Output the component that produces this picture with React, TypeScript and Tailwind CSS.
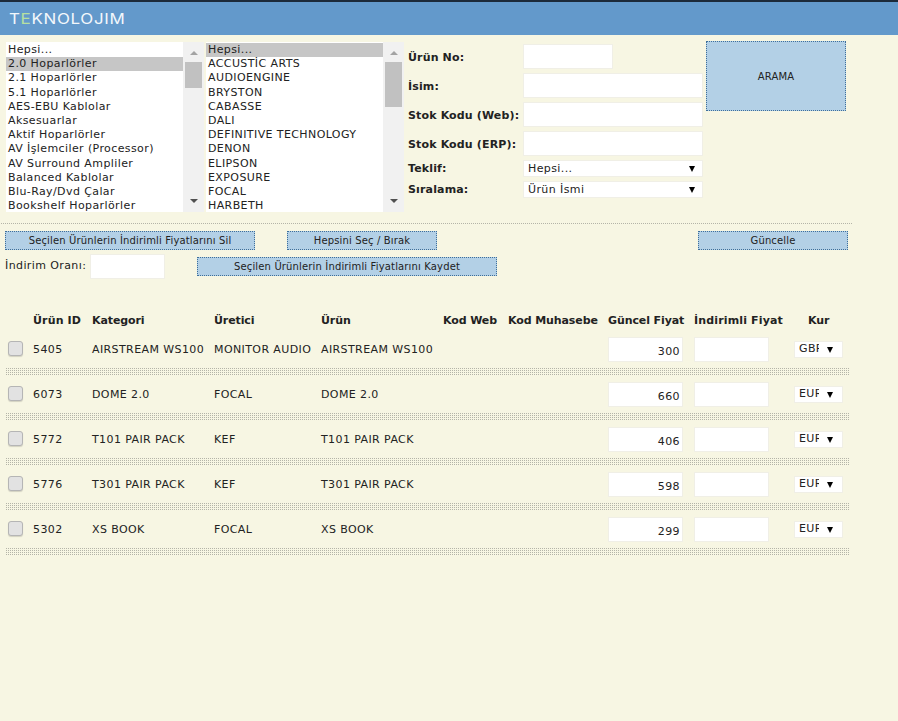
const cats = ["Hepsi...","2.0 Hoparlörler","2.1 Hoparlörler","5.1 Hoparlörler","AES-EBU Kablolar","Aksesuarlar","Aktif Hoparlörler","AV İşlemciler (Processor)","AV Surround Ampliler","Balanced Kablolar","Blu-Ray/Dvd Çalar","Bookshelf Hoparlörler"];
const brands = ["Hepsi...","ACCUSTİC ARTS","AUDIOENGINE","BRYSTON","CABASSE","DALI","DEFINITIVE TECHNOLOGY","DENON","ELIPSON","EXPOSURE","FOCAL","HARBETH"];
const rows = [
  ["5405","AIRSTREAM WS100","MONITOR AUDIO","AIRSTREAM WS100","300","GBP"],
  ["6073","DOME 2.0","FOCAL","DOME 2.0","660","EUR"],
  ["5772","T101 PAIR PACK","KEF","T101 PAIR PACK","406","EUR"],
  ["5776","T301 PAIR PACK","KEF","T301 PAIR PACK","598","EUR"],
  ["5302","XS BOOK","FOCAL","XS BOOK","299","EUR"],
];
const font = "font-['DejaVu_Sans',sans-serif]";

function ListBox({ items, selected, thumb }: { items: string[]; selected: number; thumb: string }) {
  return (
    <div className="flex h-[170px] w-[198px] overflow-hidden">
      <div className="w-[177px] bg-white pt-px">
        {items.map((t, i) => (
          <div key={t} className={`h-[14.2px] pl-[2px] leading-[14px] whitespace-nowrap ${i === selected ? "bg-[#c6c6c6]" : ""}`}>{t}</div>
        ))}
      </div>
      <div className="flex w-[21px] flex-col items-center bg-[#f1f1f1]">
        <div className="mt-[9px] h-0 w-0 border-x-[4px] border-b-[4px] border-x-transparent border-b-[#a3a3a3]" />
        <div className={`mt-[7px] w-[17px] bg-[#c1c1c1] ${thumb}`} />
        <div className="mt-auto mb-[9px] h-0 w-0 border-x-[4px] border-t-[4px] border-x-transparent border-t-[#505050]" />
      </div>
    </div>
  );
}

function Field({ label, w = "w-[180px]" }: { label: string; w?: string }) {
  return (
    <div className="flex h-[29px] items-center">
      <span className="w-[115px] pt-[3px] font-bold tracking-[0.15px] whitespace-nowrap">{label}</span>
      <div className={`h-[25px] border border-[#f0efe6] bg-white ${w}`} />
    </div>
  );
}

function Dropdown({ label, value }: { label: string; value: string }) {
  return (
    <div className="flex h-[21px] items-center">
      <span className="w-[115px] pt-[2px] font-bold tracking-[0.15px]">{label}</span>
      <div className="flex h-[17px] w-[180px] items-center justify-between border border-[#f0efe6] bg-white pr-[7px] pl-[4px]">
        <span className="pt-[2px]">{value}</span>
        <span className="h-0 w-0 border-x-[3.5px] border-t-[6px] border-x-transparent border-t-black" />
      </div>
    </div>
  );
}

function Btn({ children, w, h = "h-[19px]" }: { children: string; w: string; h?: string }) {
  return (
    <button className={`flex items-center justify-center border border-dotted border-[#3f6f9a] bg-[#b3d0e6] text-[10px] tracking-[0.15px] text-[#222] ${w} ${h}`}>
      {children}
    </button>
  );
}

const dots = "bg-[conic-gradient(#b4b4a8_25%,transparent_25%)] bg-[length:2px_2px]";

const tableCols = "grid grid-cols-[28px_59px_122px_107px_122px_65px_100px_86px_100px_55px] items-center";

export default function App() {
  return (
    <div className={`min-h-[721px] bg-[#f7f6e3] text-[11px] tracking-[0.4px] text-[#222] ${font}`}>
      <div className="h-[2px] bg-[#1c2a3a]" />
      <header className="flex h-[33px] items-center bg-[#6399cb] pl-[9px]">
        <span className="origin-left scale-x-[1.21] font-['Inter',sans-serif] text-[14px] font-normal tracking-[0.55px] text-[#f2f7fb]">
          T<span className="text-[#b7e0a0]">E</span>KNOLOJIM
        </span>
      </header>

      <section className="flex items-start pt-[7px] pl-[6px]">
        <ListBox items={cats} selected={1} thumb="h-[26px]" />
        <div className="w-[2px]" />
        <ListBox items={brands} selected={0} thumb="h-[45px]" />
        <div className="ml-[4px] w-[295px]">
          <Field label="Ürün No:" w="w-[90px]" />
          <Field label="İsim:" />
          <Field label="Stok Kodu (Web):" />
          <Field label="Stok Kodu (ERP):" />
          <div>
            <Dropdown label="Teklif:" value="Hepsi..." />
            <Dropdown label="Sıralama:" value="Ürün İsmi" />
          </div>
        </div>
        <div className="ml-[3px] -mt-px">
          <Btn w="w-[140px]" h="h-[70px]">ARAMA</Btn>
        </div>
      </section>

      <div className={`mt-[11px] h-[2px] w-[852px] ${dots}`} />

      <div className="flex w-[848px] justify-between pt-[6px] pl-[5px]">
        <div className="flex gap-[32px]">
          <Btn w="w-[250px]">Seçilen Ürünlerin İndirimli Fiyatlarını Sil</Btn>
          <Btn w="w-[150px]">Hepsini Seç / Bırak</Btn>
        </div>
        <Btn w="w-[150px]">Güncelle</Btn>
      </div>

      <div className="mt-[4px] flex items-center pl-[5px]">
        <span className="w-[85px]">İndirim Oranı:</span>
        <div className="h-[25px] w-[75px] border border-[#f0efe6] bg-white" />
        <div className="ml-[32px]">
          <Btn w="w-[300px]">Seçilen Ürünlerin İndirimli Fiyatlarını Kaydet</Btn>
        </div>
      </div>

      <div className="mt-[34px] w-[849px] pl-[5px]">
        <div className={`${tableCols} h-[14px] font-bold tracking-[-0.1px]`}>
          <span />
          <span className="tracking-[0.15px]">Ürün ID</span>
          <span>Kategori</span>
          <span>Üretici</span>
          <span>Ürün</span>
          <span className="whitespace-nowrap">Kod Web</span>
          <span className="whitespace-nowrap">Kod Muhasebe</span>
          <span className="whitespace-nowrap">Güncel Fiyat</span>
          <span className="tracking-[0.15px] whitespace-nowrap">İndirimli Fiyat</span>
          <span className="pl-[14px]">Kur</span>
        </div>
        <div className="mt-[9px]">
          {rows.map((r) => (
            <div key={r[0]}>
              <div className={`${tableCols} h-[27px]`}>
                <div className="mb-[3px] ml-[3px] h-[15px] w-[15px] rounded-[3px] border border-[#b5b5b5] bg-[#e2e2e2] shadow-[0_1px_1px_rgba(0,0,0,0.15)]" />
                <span className="pt-[1px]">{r[0]}</span>
                <span className="pt-[1px] whitespace-nowrap">{r[1]}</span>
                <span className="pt-[1px] whitespace-nowrap">{r[2]}</span>
                <span className="pt-[1px] whitespace-nowrap">{r[3]}</span>
                <span />
                <span />
                <div className="flex h-[25px] w-[75px] items-end justify-end border border-[#f0efe6] bg-white pr-[2px] pb-[1px]">{r[4]}</div>
                <div className="h-[25px] w-[75px] border border-[#f0efe6] bg-white" />
                <div className="flex h-[17px] w-[49px] items-center border border-[#f0efe6] bg-white pl-[4px]">
                  <span className="w-[20px] overflow-hidden">{r[5]}</span>
                  <span className="ml-[8px] h-0 w-0 border-x-[3.5px] border-t-[6px] border-x-transparent border-t-black" />
                </div>
              </div>
              <div className={`mt-[5px] mb-[5px] h-[8px] ${dots}`} />
            </div>
          ))}
        </div>
      </div>
    </div>
  );
}
